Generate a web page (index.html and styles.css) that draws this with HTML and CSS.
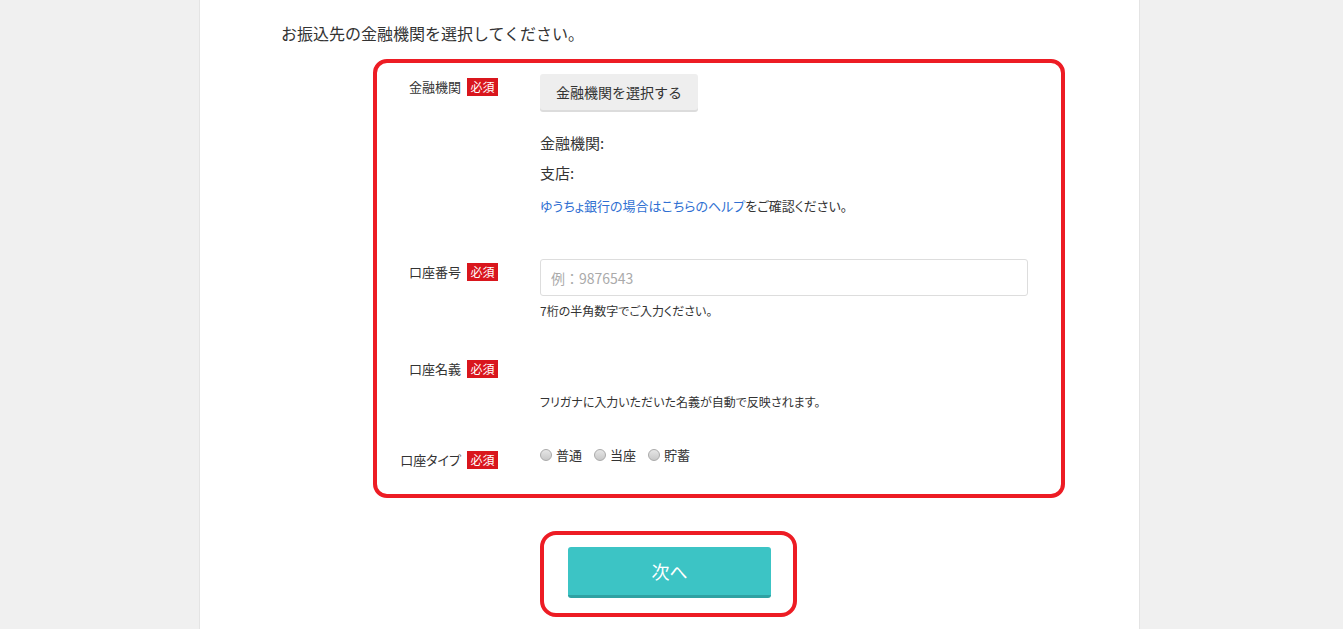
FILE: index.html
```html
<!DOCTYPE html>
<html lang="ja">
  <head>
    <meta charset="UTF-8" />
    <meta name="viewport" content="width=device-width, initial-scale=1.0" />
    <title>振込先口座の登録</title>
    <link rel="stylesheet" href="styles.css">
  </head>
  <body>
    <div class="page">
      <p class="lead">お振込先の金融機関を選択してください。</p>

      <div class="bank-box">
        <div class="row">
          <div class="label">金融機関<span class="req">必須</span></div>
          <div class="field">
            <button type="button" class="select-btn">金融機関を選択する</button>
            <p class="bank-value">金融機関:</p>
            <p class="bank-value">支店:</p>
            <p class="help"><a href="#">ゆうちょ銀行の場合はこちらのヘルプ</a>をご確認ください。</p>
          </div>
        </div>

        <div class="row">
          <div class="label">口座番号<span class="req">必須</span></div>
          <div class="field">
            <input type="text" class="text-input" placeholder="例：9876543" />
            <p class="note">7桁の半角数字でご入力ください。</p>
          </div>
        </div>

        <div class="row">
          <div class="label">口座名義<span class="req">必須</span></div>
          <div class="field">
            <div class="name-value"></div>
            <p class="note">フリガナに入力いただいた名義が自動で反映されます。</p>
          </div>
        </div>

        <div class="row">
          <div class="label">口座タイプ<span class="req">必須</span></div>
          <div class="field radios">
            <label><input type="radio" name="type" /> 普通</label>
            <label><input type="radio" name="type" /> 当座</label>
            <label><input type="radio" name="type" /> 貯蓄</label>
          </div>
        </div>
      </div>

      <div class="next-wrap">
        <button type="button" class="next-btn">次へ</button>
      </div>
    </div>
  </body>
</html>
```

FILE: styles.css
```css
* {
  box-sizing: border-box;
  margin: 0;
  padding: 0;
}

body {
  font-family: "Noto Sans CJK JP", "Noto Sans", sans-serif;
  color: #333;
  background-color: #f0f0f0;
  font-feature-settings: "palt";
}

.page {
  width: 941px;
  min-height: 629px;
  margin-left: 199px;
  padding: 21px 0 0 81px;
  background-color: #fff;
  border-left: 1px solid #e4e4e4;
  border-right: 1px solid #e4e4e4;
}

.lead {
  font-size: 16px;
  line-height: 24px;
  margin-bottom: 14px;
  font-feature-settings: normal;
}

.bank-box {
  width: 692px;
  margin-left: 92px;
  padding: 11px 0 25px;
  border: 4px solid #ed1c24;
  border-radius: 14px;
}

.row {
  display: flex;
  margin-bottom: 36px;
}

.row:last-child {
  margin-bottom: 0;
}

.label {
  width: 121px;
  margin-right: 42px;
  padding-top: 4px;
  display: flex;
  justify-content: flex-end;
  align-items: center;
  align-self: flex-start;
  gap: 6px;
  font-size: 13px;
  line-height: 18px;
}

.req {
  background-color: #d9161d;
  color: #fff;
  font-size: 12px;
  line-height: 18px;
  padding: 0 3.5px;
}

.field {
  width: 488px;
}

.select-btn {
  height: 36px;
  padding: 0 16px;
  font-family: inherit;
  font-size: 14px;
  color: #333;
  background-color: #eee;
  border: none;
  border-radius: 3px;
  box-shadow: 0 2px 0 #dcdcdc;
  margin-bottom: 18px;
}

.bank-value {
  font-size: 15px;
  line-height: 30px;
}

.help {
  margin-top: 8px;
  margin-bottom: 7px;
  font-size: 13px;
  line-height: 20px;
}

.help a {
  color: #2f6fd2;
  text-decoration: none;
}

.text-input {
  display: block;
  width: 488px;
  height: 37px;
  padding: 0 10px;
  font-family: inherit;
  font-size: 14px;
  border: 1px solid #ddd;
  border-radius: 3px;
}

.text-input::placeholder {
  color: #aaa;
}

.note {
  margin-top: 6px;
  font-size: 12px;
  line-height: 18px;
}

.name-value {
  height: 31px;
}

.radios {
  display: flex;
  align-items: flex-start;
  gap: 12px;
  font-size: 13px;
  line-height: 16px;
}

.radios label {
  display: flex;
  align-items: center;
  gap: 4px;
}

.radios input {
  appearance: none;
  width: 12px;
  height: 12px;
  border: 1px solid #aaa;
  border-radius: 50%;
  background: linear-gradient(#e6e6e6, #c8c8c8);
}

.next-wrap {
  width: 257px;
  margin: 33px 0 0 259px;
  padding: 12px 22px 15px 24px;
  border: 4px solid #ed1c24;
  border-radius: 16px;
}

.next-btn {
  display: block;
  width: 203px;
  height: 51px;
  font-family: inherit;
  font-size: 18px;
  color: #fff;
  background-color: #3cc4c5;
  border: none;
  border-bottom: 3px solid #2fa2a3;
  border-radius: 3px;
}
```
